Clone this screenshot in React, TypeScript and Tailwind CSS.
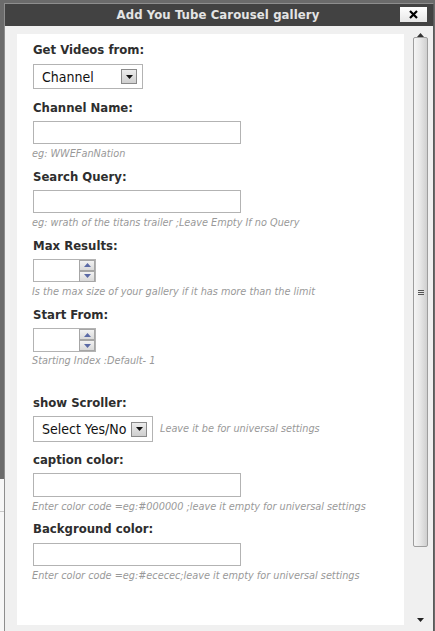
import React from 'react';

const font = "font-['DejaVu_Sans_Condensed','DejaVu_Sans',sans-serif]";

const Label = ({ text, className = '' }: { text: string; className?: string }) => (
  <div className={`h-4 leading-4 text-[13px] font-bold text-[#2e2e2e] ${className}`}>{text}</div>
);

const Hint = ({ text, className = '' }: { text: string; className?: string }) => (
  <div className={`h-[14px] leading-[14px] text-[10.8px] italic text-[#999] -ml-[1px] whitespace-nowrap ${className}`}>{text}</div>
);

const TextBox = ({ className = '' }: { className?: string }) => (
  <div className={`w-[208px] h-[23px] border border-[#b3b3b3] bg-white ${className}`} />
);

const Caret = () => (
  <div className="w-[16px] h-[15px] border border-[#8a8a8a] bg-gradient-to-b from-[#ececec] to-[#cfcfcf] flex items-center justify-center">
    <svg width="7" height="4" viewBox="0 0 7 4">
      <path d="M0 0H7L3.5 4Z" fill="#111" />
    </svg>
  </div>
);

const SelectBox = ({ value, width, className = '' }: { value: string; width: string; className?: string }) => (
  <div className={`${width} h-[25px] border border-[#b3b3b3] bg-white flex items-center justify-between pl-[8px] pr-[5px] ${className}`}>
    <span className="text-[14px] leading-none text-[#111] font-normal">{value}</span>
    <Caret />
  </div>
);

const Spin = ({ up }: { up?: boolean }) => (
  <div className="w-[16px] h-[11px] border border-[#a6a6a6] bg-gradient-to-b from-[#f2f2f2] to-[#d9d9d9] flex items-center justify-center">
    <svg width="7" height="4" viewBox="0 0 7 4">
      <path d={up ? 'M0 4H7L3.5 0Z' : 'M0 0H7L3.5 4Z'} fill="#5b6aa6" />
    </svg>
  </div>
);

const NumberBox = ({ className = '' }: { className?: string }) => (
  <div className={`w-[63px] h-[23px] border border-[#b3b3b3] bg-white flex justify-end items-center ${className}`}>
    <div className="flex flex-col">
      <Spin up />
      <Spin />
    </div>
  </div>
);

export default function App() {
  return (
    <div className={`w-[435px] h-[631px] overflow-hidden bg-[#6b6b6b] flex ${font}`}>
      {/* page behind the overlay, left edge */}
      <div className="w-[4px] flex flex-col">
        <div className="h-[479px] bg-[#6b6b6b]" />
        <div className="h-[33px] bg-[#f7f7f7] border-b border-[#c8c8c8]" />
        <div className="flex-1 bg-[#f7f7f7]" />
      </div>

      {/* dialog */}
      <div className="w-[430px] mt-[3px] flex flex-col border-l border-t border-[#8e8e8e] border-r border-r-[#5a5a5a]">
        {/* title bar */}
        <div className="h-[22px] bg-[#424242] flex items-center relative">
          <div className="flex-1 text-center text-[13px] font-bold text-[#e4e4e4] tracking-[0.1px] pr-[2px]">
            Add You Tube Carousel gallery
          </div>
          <div className="absolute right-[6px] top-[3px] w-[27px] h-[15px] bg-gradient-to-b from-white to-[#e6e6e6] flex items-center justify-center">
            <svg width="9" height="9" viewBox="0 0 9 9">
              <path d="M1 1L8 8M8 1L1 8" stroke="#000" strokeWidth="2.2" />
            </svg>
          </div>
        </div>

        {/* body */}
        <div className="flex-1 bg-[#f0f0f0] flex">
          {/* white panel */}
          <div className="ml-[12px] mt-[8px] w-[387px] h-[591px] bg-white pl-[16px] pt-[8px]">
            <Label text="Get Videos from:" />
            <SelectBox value="Channel" width="w-[110px]" className="mt-[6px]" />

            <Label text="Channel Name:" className="mt-[11px]" />
            <TextBox className="mt-[5px]" />
            <Hint text="eg: WWEFanNation" className="mt-[3px]" />

            <Label text="Search Query:" className="mt-[8px]" />
            <TextBox className="mt-[5px]" />
            <Hint text="eg: wrath of the titans trailer ;Leave Empty If no Query" className="mt-[3px]" />

            <Label text="Max Results:" className="mt-[8px]" />
            <NumberBox className="mt-[5px]" />
            <Hint text="Is the max size of your gallery if it has more than the limit" className="mt-[3px]" />

            <Label text="Start From:" className="mt-[8px]" />
            <NumberBox className="mt-[5px] h-[24px]" />
            <Hint text="Starting Index :Default- 1" className="mt-[2px]" />

            <Label text="show Scroller:" className="mt-[27px]" />
            <div className="mt-[5px] flex items-center gap-[7px]">
              <SelectBox value="Select Yes/No" width="w-[120px]" className="h-[26px] pr-[3px]" />
              <Hint text="Leave it be for universal settings" className="ml-0" />
            </div>

            <Label text="caption color:" className="mt-[10px]" />
            <TextBox className="mt-[5px] h-[24px]" />
            <Hint text="Enter color code =eg:#000000 ;leave it empty for universal settings" className="mt-[3px]" />

            <Label text="Background color:" className="mt-[7px]" />
            <TextBox className="mt-[6px]" />
            <Hint text="Enter color code =eg:#ececec;leave it empty for universal settings" className="mt-[3px]" />
          </div>

          {/* scrollbar */}
          <div className="ml-[9px] w-[15px] flex flex-col items-center">
            <div className="h-[11px] flex items-end justify-center">
              <svg width="7" height="4" viewBox="0 0 7 4">
                <path d="M0 4H7L3.5 0Z" fill="#333" />
              </svg>
            </div>
            <div className="w-[15px] h-[510px] border border-[#9e9e9e] rounded-[2px] bg-gradient-to-r from-[#f5f5f5] via-[#e6e6e6] to-[#cfcfcf] flex items-center justify-center">
              <div className="flex flex-col gap-[1px]">
                <div className="w-[6px] h-[1px] bg-[#555]" />
                <div className="w-[6px] h-[1px] bg-[#555]" />
                <div className="w-[6px] h-[1px] bg-[#555]" />
              </div>
            </div>
            <div className="flex-1 flex items-end justify-center pb-[9px]">
              <svg width="7" height="4" viewBox="0 0 7 4">
                <path d="M0 0H7L3.5 4Z" fill="#222" />
              </svg>
            </div>
          </div>
        </div>
      </div>
    </div>
  );
}
